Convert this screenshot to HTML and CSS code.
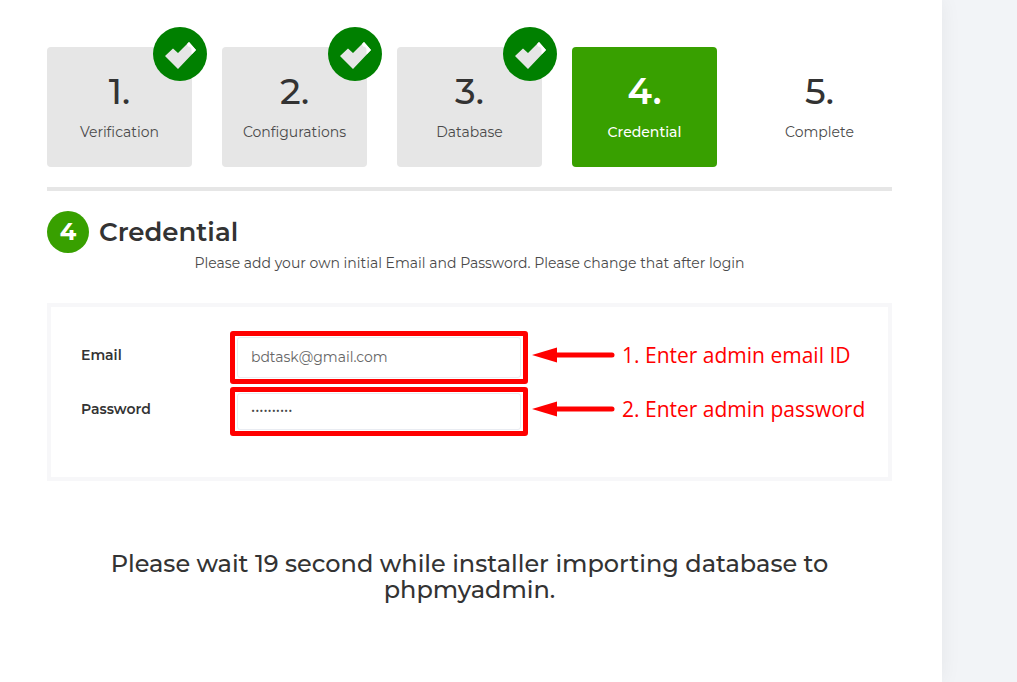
FILE: index.html
```html
<!DOCTYPE html>
<html lang="en">
<head>
<meta charset="utf-8">
<meta name="viewport" content="width=device-width, initial-scale=1">
<title>Installer - Credential</title>
<link rel="stylesheet" href="styles.css">
</head>
<body>
<svg class="defs" aria-hidden="true">
  <symbol id="check" viewBox="0 0 54 54">
    <circle cx="27" cy="27" r="27" fill="#008000"/>
    <path d="M12 29 20 21.500 25 26 36 15 43 23 25 42Z" fill="#e6e6e6"/>
    <path d="M34 17 36 15 43 23 38.500 27.500V23Q38.500 19.500 35 19.500Z" fill="#fff"/>
  </symbol>
  <symbol id="arrow" viewBox="0 0 84 16">
    <path d="M0 8 25 .5V15.500Z" fill="#f00"/>
    <path d="M24 8H80" stroke="#f00" stroke-width="5" stroke-linecap="round"/>
  </symbol>
</svg>
<main class="sheet">
  <ol class="steps">
    <li class="step done"><span class="num">1.</span><span class="name">Verification</span><svg class="badge" role="img" aria-label="Done"><use href="#check"/></svg></li>
    <li class="step done"><span class="num">2.</span><span class="name">Configurations</span><svg class="badge" role="img" aria-label="Done"><use href="#check"/></svg></li>
    <li class="step done"><span class="num">3.</span><span class="name">Database</span><svg class="badge" role="img" aria-label="Done"><use href="#check"/></svg></li>
    <li class="step current" aria-current="step"><span class="num">4.</span><span class="name">Credential</span></li>
    <li class="step"><span class="num">5.</span><span class="name">Complete</span></li>
  </ol>
  <header class="heading">
    <span class="circle">4</span>
    <h1 class="title">Credential</h1>
  </header>
  <p class="intro">Please add your own initial Email and Password. Please change that after login</p>
  <form class="panel">
    <div class="row">
      <label class="label" for="email">Email</label>
      <div class="frame"><input class="input" id="email" type="email" value="bdtask@gmail.com"></div>
      <div class="note"><svg class="arrow" aria-hidden="true"><use href="#arrow"/></svg><span>1. Enter admin email ID</span></div>
    </div>
    <div class="row">
      <label class="label" for="password">Password</label>
      <div class="frame"><input class="input secret" id="password" type="password" value="adminadmin"></div>
      <div class="note"><svg class="arrow" aria-hidden="true"><use href="#arrow"/></svg><span>2. Enter admin password</span></div>
    </div>
  </form>
  <h2 class="wait">Please wait 19 second while installer importing database to phpmyadmin.</h2>
</main>
</body>
</html>
```
FILE: styles.css
```css
* { box-sizing: border-box; }

body {
  margin: 0;
  padding-right: 75px;
  background: #f2f4f7;
  color: #333;
  font-family: Montserrat, Inter, sans-serif;
  font-size: 14px;
  line-height: 20px;
}

.defs { position: absolute; width: 0; height: 0; }

.sheet {
  min-height: 100vh;
  padding: 47px 50px 47px 47px;
  background: #fff;
  box-shadow: 0 0 20px rgba(0, 0, 0, 0.06);
}

.steps {
  display: grid;
  grid-template-columns: repeat(5, 1fr);
  gap: 30px;
  margin: 0;
  padding: 0 0 20px;
  border-bottom: 4px solid #e6e6e6;
  list-style: none;
}

.step {
  position: relative;
  display: flex;
  flex-direction: column;
  align-items: center;
  gap: 11px;
  padding: 24px 0 25px;
  border-radius: 4px;
}

.num { font-size: 36px; line-height: 40px; font-weight: 500; }
.name { color: #4a4a4a; font-weight: 400; }
.done { background: #e6e6e6; }
.current { background: #38a000; color: #fff; }
.current .num { font-weight: 600; }
.current .name { color: #fff; font-weight: 500; }

.badge {
  position: absolute;
  top: -20px;
  right: -15px;
  width: 54px;
  height: 54px;
}

.heading {
  display: flex;
  align-items: center;
  gap: 10px;
  margin-top: 20px;
}

.circle {
  width: 42px;
  border-radius: 50%;
  background: #38a000;
  color: #fff;
  font-size: 24px;
  font-weight: 700;
  line-height: 42px;
  text-align: center;
}

.title { margin: 0; font-size: 26px; font-weight: 600; line-height: 42px; }
.intro { margin: 0; color: #4a4a4a; text-align: center; }

.panel {
  display: grid;
  gap: 3px;
  margin-top: 30px;
  padding: 24px 20px 41px 30px;
  border: 4px solid #f7f7f9;
}

.row { display: grid; grid-template-columns: 149px 298px 1fr; align-items: center; }
.label { padding-bottom: 6px; font-weight: 600; }

.frame {
  padding: 1px 2px;
  border: 5px solid #f00;
  border-radius: 3px;
}

.input {
  display: block;
  width: 100%;
  height: 41px;
  padding: 0 13px 2px;
  border: 1px solid #e9ecf2;
  border-radius: 3px;
  background: #fff;
  color: #666;
  font: inherit;
}

.secret { height: 37px; padding-bottom: 4px; color: #444; }

.note {
  display: flex;
  align-items: center;
  gap: 6px;
  padding: 0 0 6px 4px;
  color: #f00;
  font-family: "Open Sans", sans-serif;
  font-size: 21px;
  font-weight: 400;
  line-height: 28px;
  white-space: nowrap;
}

.arrow { flex: none; width: 84px; height: 16px; }

.wait {
  margin: 70px 50px 0;
  font-size: 24px;
  font-weight: 500;
  line-height: 26px;
  text-align: center;
}
```
